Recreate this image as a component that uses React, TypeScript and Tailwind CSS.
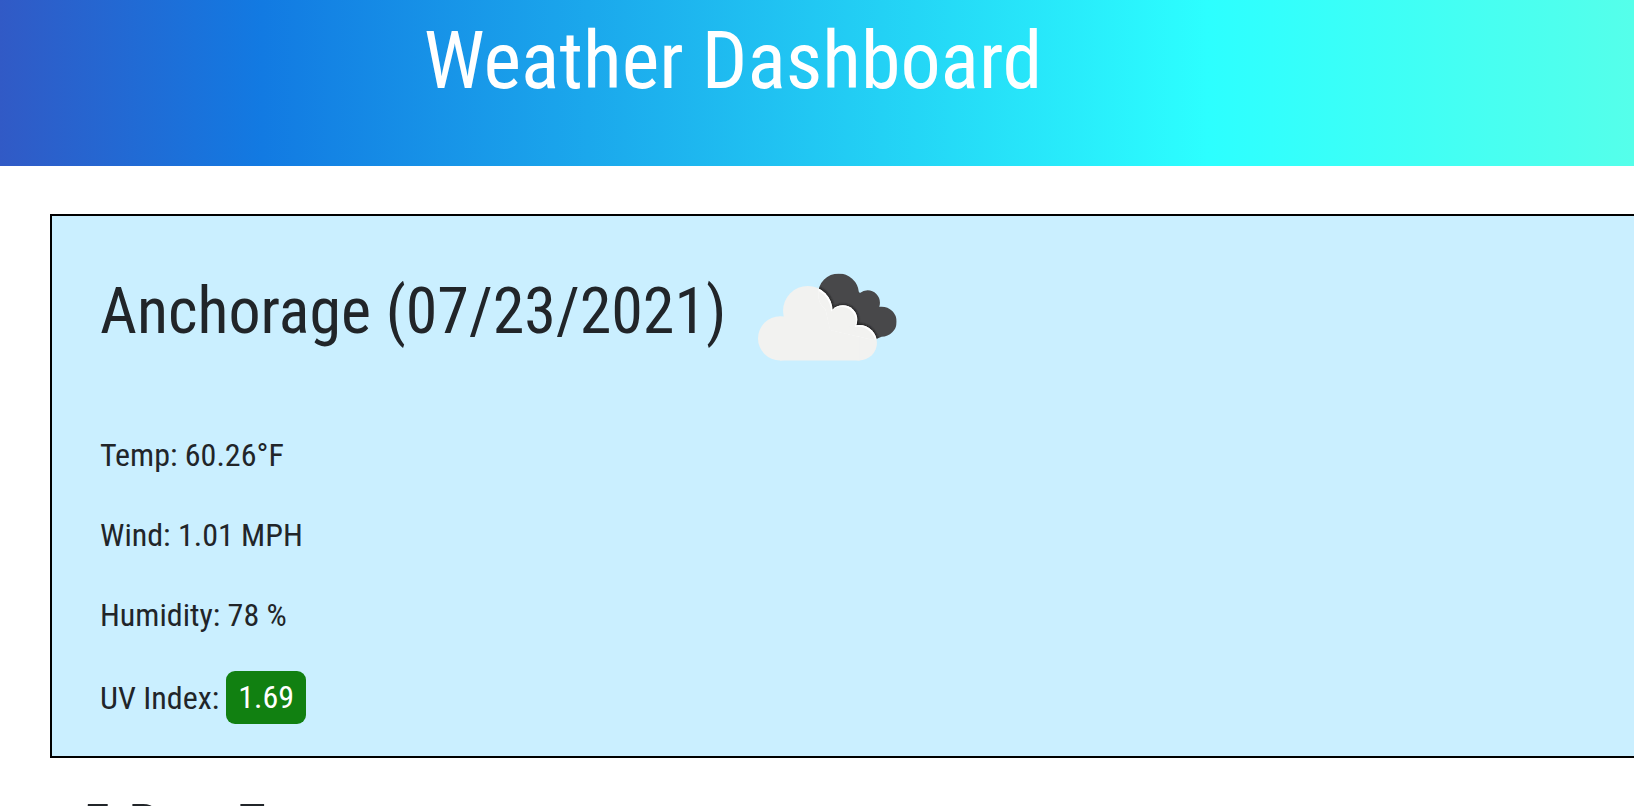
const readings = [
  { label: "Temp", value: "60.26°F" },
  { label: "Wind", value: "1.01 MPH" },
  { label: "Humidity", value: "78 %" },
];

function BrokenClouds() {
  return (
    <svg
      viewBox="84 70 416 262"
      className="h-[88px] w-[139px] shrink-0"
      role="img"
      aria-label="Broken clouds"
    >
      <defs>
        <filter id="edge" x="-10%" y="-10%" width="120%" height="120%">
          <feGaussianBlur stdDeviation="3" />
        </filter>
        <clipPath id="back">
          <circle cx="325" cy="132" r="61" />
          <circle cx="412" cy="158" r="37" />
          <circle cx="454" cy="215" r="45" />
          <path d="M270 110L380 120L440 180L454 260L430 270L300 240Z" />
        </clipPath>
        <g id="front">
          <circle cx="150" cy="265" r="66" />
          <circle cx="233" cy="182" r="74" />
          <circle cx="338" cy="209" r="43" />
          <circle cx="387" cy="278" r="53" />
          <path d="M150 200H340L388 250V331H150Z" />
        </g>
      </defs>
      <g clipPath="url(#back)">
        <rect x="84" y="70" width="416" height="262" fill="#48484a" />
        <use href="#front" fill="#1c1c1e" stroke="#1c1c1e" strokeWidth="7" filter="url(#edge)" />
      </g>
      <use href="#front" fill="#f2f2f0" />
      <g clipPath="url(#back)">
        <use href="#front" fill="#fff" />
        <use href="#front" fill="#f2f2f0" transform="translate(-4 5)" />
      </g>
    </svg>
  );
}

export default function App() {
  return (
    <div className="h-screen overflow-hidden bg-white font-['Roboto_Condensed','Liberation_Sans_Narrow',Roboto,sans-serif] text-[#212529]">
      <header className="bg-[linear-gradient(90deg,#315ac6_0%,#127ae2_16%,#2cffff_74%,#55ffea_100%)] pt-[13px] pr-[168px] pb-[57px] text-center text-white">
        <h1 className="text-[80px] leading-[96px] font-normal">Weather Dashboard</h1>
      </header>

      <main className="pt-12 pl-[50px]">
        <section className="border-y-2 border-l-2 border-black bg-[#caefff] px-12 pt-[57px] pb-8">
          <div className="flex items-center gap-8 pb-[70px]">
            <h2 className="pb-2.5 text-[64px] leading-[76px] font-normal">Anchorage (07/23/2021)</h2>
            <BrokenClouds />
          </div>
          <div className="flex flex-col gap-8 text-[32px] leading-[48px]">
            {readings.map((r) => (
              <p key={r.label}>
                {r.label}: {r.value}
              </p>
            ))}
            <p className="flex items-center gap-[7px]">
              UV Index:
              <span className="rounded-[9px] bg-[#118011] px-3 pt-0.5 pb-[3px] text-white">1.69</span>
            </p>
          </div>
        </section>

        <h3 className="pt-[33px] pl-[30px] text-[64px] leading-[76px] font-normal">5-Day Forecast:</h3>
      </main>
    </div>
  );
}
